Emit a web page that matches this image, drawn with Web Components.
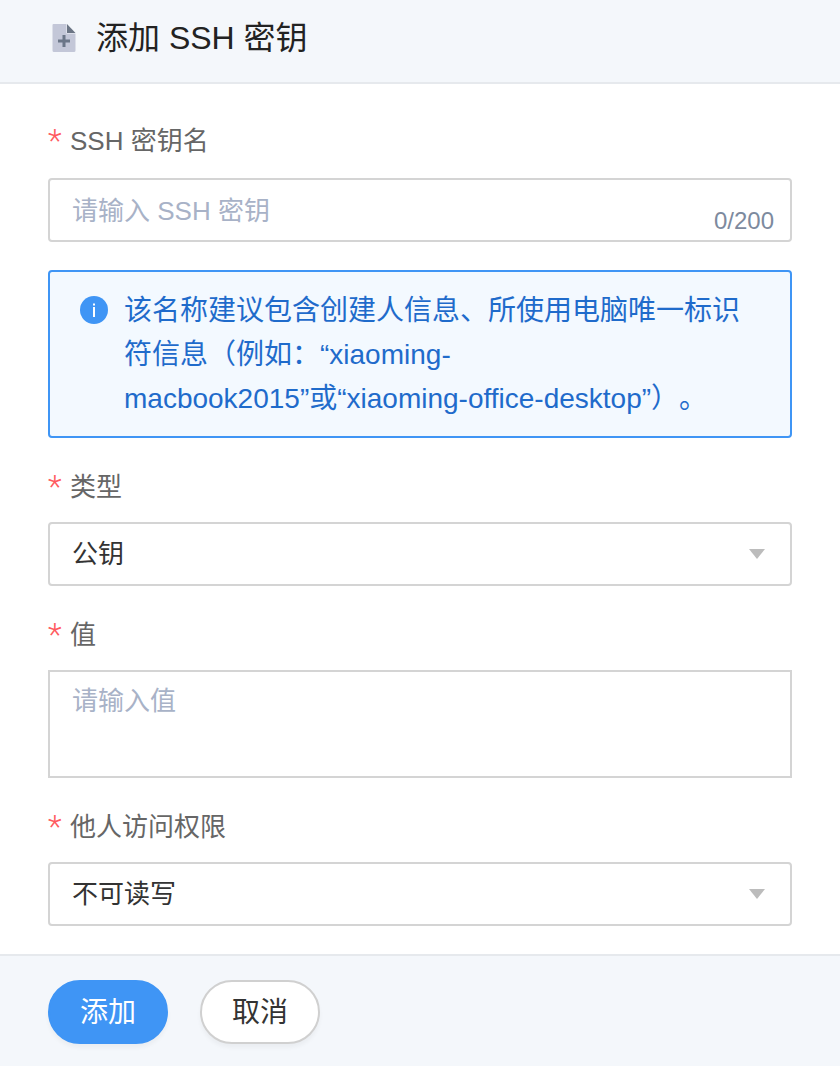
<!DOCTYPE html>
<html lang="zh">
<head>
<meta charset="utf-8">
<title>添加 SSH 密钥</title>
<style>
html, body { margin: 0; padding: 0; }
body {
  width: 840px;
  height: 1066px;
  display: flex;
  flex-direction: column;
  overflow: hidden;
  background: #fff;
  font-family: "Liberation Sans", "Noto Sans CJK SC", sans-serif;
}
</style>
</head>
<body>
<dialog-header>添加 SSH 密钥</dialog-header>
<form-body>
  <form-item label="SSH 密钥名">
    <text-field placeholder="请输入 SSH 密钥" count="0/200"></text-field>
    <info-alert>该名称建议包含创建人信息、所使用电脑唯一标识符信息（例如：“xiaoming-<br>macbook2015”或“xiaoming-office-desktop”）。</info-alert>
  </form-item>
  <form-item label="类型"><select-field value="公钥"></select-field></form-item>
  <form-item label="值"><text-area placeholder="请输入值"></text-area></form-item>
  <form-item label="他人访问权限"><select-field value="不可读写"></select-field></form-item>
</form-body>
<dialog-footer>
  <pill-button primary>添加</pill-button>
  <pill-button>取消</pill-button>
</dialog-footer>

<script>
class dialogHeader extends HTMLElement {
   constructor() {
      super();
      this.attachShadow({mode: 'open'});
      this.shadowRoot.innerHTML = `
        <style>
        :host{
            display: flex;
            align-items: center;
            flex: none;
            box-sizing: border-box;
            height: 84px;
            padding: 0 0 12px 52px;
            gap: 20px;
            background: #f4f7fb;
            border-bottom: 2px solid #e6e9ed;
            color: #222;
            font-size: 32px;
        }
        svg{ display: block; margin-top: 6px; }
        </style>
        <svg width="24" height="28" viewBox="0 0 24 28">
            <path d="M1.500 0H14.500V9.500H23.500V26.500a1.500 1.500 0 0 1-1.500 1.500H2a1.500 1.500 0 0 1-1.500-1.500V1a1 1 0 0 1 1-1Z" fill="#c3c7d8"/>
            <path d="M15 0 23.500 9H15Z" fill="#6b7585"/>
            <path d="M6 17H18M12 11V23" stroke="#6b7688" stroke-width="3" fill="none"/>
        </svg>
        <slot></slot>
      `;
   }
}
customElements.define('dialog-header', dialogHeader);

class formBody extends HTMLElement {
   constructor() {
      super();
      this.attachShadow({mode: 'open'});
      this.shadowRoot.innerHTML = `
        <style>
        :host{
            display: flex;
            flex-direction: column;
            flex: 1;
            padding: 10px 48px 0;
        }
        </style>
        <slot></slot>
      `;
   }
}
customElements.define('form-body', formBody);

class formItem extends HTMLElement {
   constructor() {
      super();
      this.attachShadow({mode: 'open'});
      this.shadowRoot.innerHTML = `
        <style>
        :host{
            display: block;
            margin-top: 26px;
        }
        .label{
            display: flex;
            align-items: center;
            height: 40px;
            margin-bottom: 18px;
            font-size: 26px;
            color: #666;
        }
        :host(:first-of-type) .label{
            height: 36px;
            margin-bottom: 22px;
        }
        .star{
            color: #ff5a60;
            font-family: Roboto, sans-serif;
            font-weight: 300;
            font-size: 32px;
            line-height: 40px;
            width: 22px;
            margin-top: 4px;
        }
        </style>
        <div class="label"><span class="star">*</span><span>${this.getAttribute('label')}</span></div>
        <slot></slot>
      `;
   }
}
customElements.define('form-item', formItem);

class textField extends HTMLElement {
   constructor() {
      super();
      this.attachShadow({mode: 'open'});
      this.shadowRoot.innerHTML = `
        <style>
        :host{
            display: flex;
            justify-content: space-between;
            box-sizing: border-box;
            height: 64px;
            padding: 0 16px 0 22px;
            border: 2px solid #d4d4d4;
            border-radius: 4px;
            font-size: 26px;
        }
        .ph{ color: #a8b2c7; line-height: 62px; }
        .count{ color: #7d8a9e; font-size: 24px; line-height: 28px; align-self: flex-end; margin-bottom: 5px; }
        </style>
        <span class="ph">${this.getAttribute('placeholder')}</span>
        <span class="count">${this.getAttribute('count')}</span>
      `;
   }
}
customElements.define('text-field', textField);

class infoAlert extends HTMLElement {
   constructor() {
      super();
      this.attachShadow({mode: 'open'});
      this.shadowRoot.innerHTML = `
        <style>
        :host{
            display: flex;
            box-sizing: border-box;
            height: 168px;
            margin-top: 28px;
            padding: 16.600px 30px 0;
            gap: 16px;
            border: 2px solid #3f95f5;
            border-radius: 4px;
            background: #f3f9ff;
            color: #1f6bcb;
            font-size: 28px;
            line-height: 44.200px;
            text-spacing-trim: space-all;
        }
        svg{ flex: none; display: block; margin-top: 7px; }
        </style>
        <svg width="28" height="28" viewBox="0 0 28 28">
            <circle cx="14" cy="14" r="14" fill="#3f95f5"/>
            <rect x="13" y="11" width="2" height="10" fill="#fff"/>
            <rect x="13" y="7.500" width="2" height="2" fill="#fff"/>
        </svg>
        <div><slot></slot></div>
      `;
   }
}
customElements.define('info-alert', infoAlert);

class selectField extends HTMLElement {
   constructor() {
      super();
      this.attachShadow({mode: 'open'});
      this.shadowRoot.innerHTML = `
        <style>
        :host{
            display: flex;
            align-items: center;
            justify-content: space-between;
            box-sizing: border-box;
            height: 64px;
            padding: 0 24px 0 22px;
            border: 2px solid #d4d4d4;
            border-radius: 4px;
            font-size: 26px;
            color: #333;
        }
        .value{ margin-bottom: 6px; }
        .arrow{
            width: 0;
            height: 0;
            margin-right: 1px;
            border: 8px solid transparent;
            border-top: 10px solid #bcbcbc;
            border-bottom: 0;
        }
        </style>
        <span class="value">${this.getAttribute('value')}</span>
        <span class="arrow"></span>
      `;
   }
}
customElements.define('select-field', selectField);

class textArea extends HTMLElement {
   constructor() {
      super();
      this.attachShadow({mode: 'open'});
      this.shadowRoot.innerHTML = `
        <style>
        :host{
            display: block;
            box-sizing: border-box;
            height: 108px;
            padding: 0 22px;
            border: 2px solid #d4d4d4;
            font-size: 26px;
            line-height: 58px;
            color: #a8b2c7;
        }
        </style>
        ${this.getAttribute('placeholder')}
      `;
   }
}
customElements.define('text-area', textArea);

class dialogFooter extends HTMLElement {
   constructor() {
      super();
      this.attachShadow({mode: 'open'});
      this.shadowRoot.innerHTML = `
        <style>
        :host{
            display: flex;
            flex: none;
            box-sizing: border-box;
            height: 112px;
            padding: 24px 48px 0;
            gap: 32px;
            background: #f4f7fb;
            border-top: 2px solid #e6e9ed;
        }
        </style>
        <slot></slot>
      `;
   }
}
customElements.define('dialog-footer', dialogFooter);

class pillButton extends HTMLElement {
   constructor() {
      super();
      this.attachShadow({mode: 'open'});
      this.shadowRoot.innerHTML = `
        <style>
        :host{
            display: flex;
            align-items: center;
            justify-content: center;
            box-sizing: border-box;
            width: 120px;
            height: 64px;
            padding-bottom: 4px;
            border: 2px solid #d0d0d0;
            border-radius: 32px;
            background: #fff;
            color: #333;
            font-size: 28px;
            box-shadow: 0 4px 4px rgba(0,0,0,.04);
        }
        :host([primary]){
            border-color: #3f95f5;
            background: #3f95f5;
            color: #fff;
        }
        </style>
        <slot></slot>
      `;
   }
}
customElements.define('pill-button', pillButton);
</script>
</body>
</html>
